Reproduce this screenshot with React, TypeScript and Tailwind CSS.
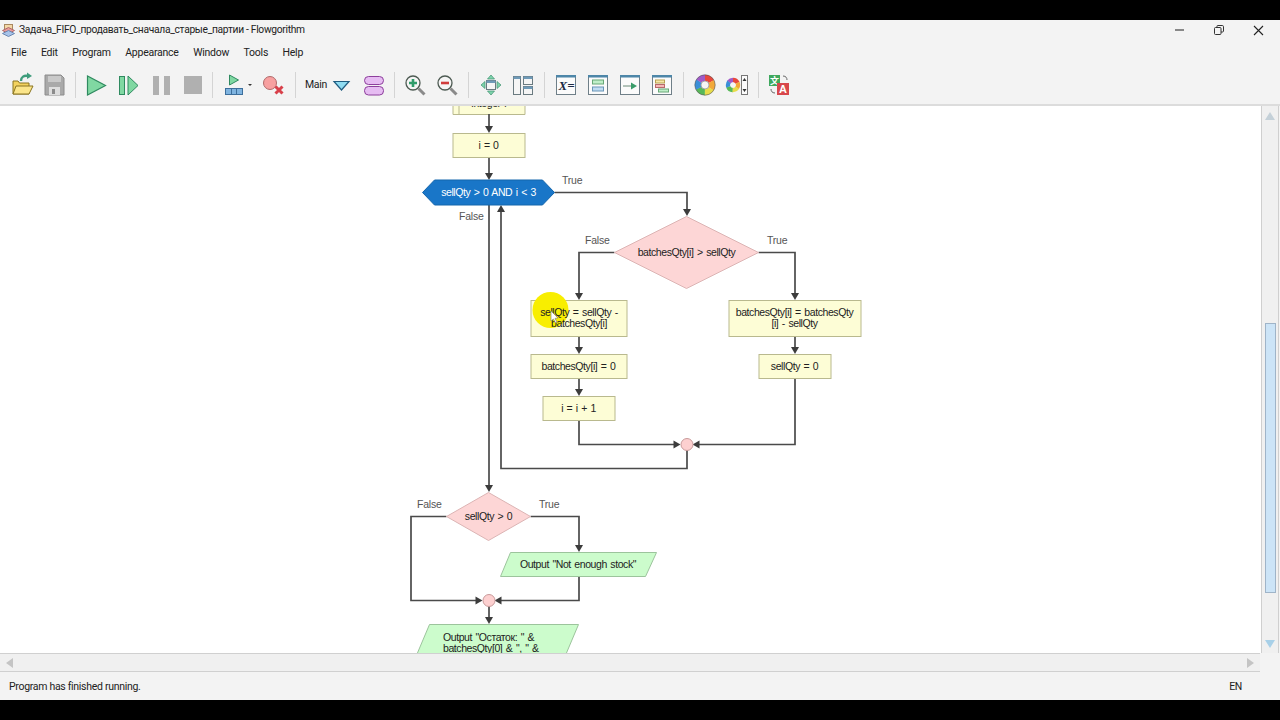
import type { ReactNode } from "react"

const menuItems = ["File", "Edit", "Program", "Appearance", "Window", "Tools", "Help"]

function Ico({ children, w = 32 }: { children: ReactNode; w?: number }) {
  return (
    <svg width={w} height={32} viewBox={`0 0 ${w} 32`} className="shrink-0">
      {children}
    </svg>
  )
}

function Sep({ className }: { className: string }) {
  return <div className={`h-[26px] w-px shrink-0 bg-[#d4d4d4] ${className}`} />
}

// little window frame used by the four "panel" buttons
function Panel({ children }: { children?: ReactNode }) {
  return (
    <>
      <rect x="6.5" y="6.5" width="19" height="19" fill="#fbfbfb" stroke="#6f7f88" />
      <rect x="6" y="6" width="20" height="2.5" fill="#4d86a8" />
      {children}
    </>
  )
}

function Wheel({ cx, cy, r, sw }: { cx: number; cy: number; r: number; sw: number }) {
  const colors = ["#e8483c", "#f2a93a", "#e8dc4a", "#58b858", "#3a8fd8", "#a05ac8"]
  const c = 2 * Math.PI * r
  return (
    <g transform={`rotate(-90 ${cx} ${cy})`}>
      {colors.map((col, i) => (
        <circle
          key={col}
          cx={cx}
          cy={cy}
          r={r}
          fill="none"
          stroke={col}
          strokeWidth={sw}
          strokeDasharray={`${c / 6 + 0.3} ${c}`}
          strokeDashoffset={(-i * c) / 6}
        />
      ))}
    </g>
  )
}

function Toolbar() {
  return (
    <div className="flex h-[36px] items-center pl-[6px]">
      <Ico>
        <path d="M7 25V12h5l1.5 2H23v11z" fill="#f3d25f" stroke="#8a7420" />
        <path d="M7 25l3-8h17l-4 8z" fill="#fbe58a" stroke="#8a7420" />
        <path d="M15 12c0-4 3-6 7-5" fill="none" stroke="#3e9c7c" strokeWidth="2.4" />
        <path d="M21 3.5l5 3.5-5 3z" fill="#3e9c7c" />
      </Ico>
      <Ico>
        <path d="M7 6h16l3 3v17H7z" fill="#a9a9a9" stroke="#8c8c8c" />
        <rect x="10" y="7" width="13" height="6" fill="#c9c9c9" />
        <rect x="11" y="18" width="11" height="8" fill="#dedede" />
        <rect x="14" y="20" width="3" height="5" fill="#8c8c8c" />
      </Ico>
      <Sep className="ml-[5px] mr-[4px]" />
      <Ico>
        <path d="M7.5 7v19l18-9.5z" fill="#80d8a2" stroke="#2f8a60" strokeWidth="1.2" />
      </Ico>
      <Ico>
        <rect x="7.5" y="7.5" width="5" height="18" fill="#80d8a2" stroke="#2f8a60" />
        <path d="M16 7v19l10-9.5z" fill="#80d8a2" stroke="#2f8a60" />
      </Ico>
      <Ico>
        <rect x="9" y="7" width="6" height="19" fill="#b0b0b0" />
        <rect x="20" y="7" width="6" height="19" fill="#b0b0b0" />
      </Ico>
      <Ico>
        <rect x="8" y="7" width="18" height="18" fill="#b0b0b0" />
      </Ico>
      <Sep className="ml-[4px] mr-[5px]" />
      <Ico w={38}>
        <path d="M11.5 6v10l9-5z" fill="#80d8a2" stroke="#2f8a60" />
        <rect x="7.5" y="19.5" width="17" height="6" fill="#7fb4e0" stroke="#3d6f9c" />
        <path d="M13.5 19.5v6M18.5 19.5v6" stroke="#3d6f9c" />
        <path d="M30 15h4l-2 2z" fill="#333" />
      </Ico>
      <Ico>
        <circle cx="14" cy="14" r="6.5" fill="#f7a0a0" stroke="#b06a6a" />
        <path d="M19.5 17.5l7 7M26.5 17.5l-7 7" stroke="#d8404a" strokeWidth="3" />
      </Ico>
      <Sep className="ml-[7px] mr-[2px]" />
      <span className="w-[28px] shrink-0 pl-[7px] font-['Roboto',sans-serif] text-[10.5px] tracking-[-0.3px] text-[#222]">
        Main
      </span>
      <Ico>
        <path d="M8 12.5h15l-7.5 8.5z" fill="#8fdcf2" stroke="#1f5c80" strokeWidth="1.2" />
      </Ico>
      <Ico>
        <rect x="6.5" y="7.5" width="19" height="8" rx="4" fill="#e6bcf2" stroke="#8d3f9c" />
        <rect x="6.5" y="17.5" width="19" height="8.5" rx="4" fill="#e6bcf2" stroke="#8d3f9c" />
      </Ico>
      <Sep className="ml-[4px] mr-[4px]" />
      <Ico>
        <circle cx="14" cy="14" r="7" fill="#f5f5f5" stroke="#4d5a52" strokeWidth="1.3" />
        <path d="M19.5 19.5l6 6" stroke="#8a8a8a" strokeWidth="3" />
        <path d="M14 10v8M10 14h8" stroke="#2f9c6a" strokeWidth="2.6" />
      </Ico>
      <Ico>
        <circle cx="14" cy="14" r="7" fill="#f5f5f5" stroke="#4d5a52" strokeWidth="1.3" />
        <path d="M19.5 19.5l6 6" stroke="#8a8a8a" strokeWidth="3" />
        <path d="M10 14h8" stroke="#d03c3c" strokeWidth="2.6" />
      </Ico>
      <Sep className="ml-[5px] mr-[6px]" />
      <Ico>
        <rect x="11.5" y="11.5" width="9" height="9" fill="#f5f5f5" stroke="#6a7a80" />
        <rect x="11.5" y="11.5" width="9" height="2.5" fill="#6f9ab8" />
        <path d="M16 6l3.5 4h-7zM16 26l-3.5-4h7zM6 16l4-3.5v7zM26 16l-4 3.5v-7z" fill="#7fd4ac" stroke="#3d8f70" strokeWidth="0.7" />
      </Ico>
      <Ico>
        <rect x="6.5" y="7.5" width="7" height="18" fill="#f5f5f5" stroke="#6a7a80" />
        <rect x="6.5" y="7.5" width="7" height="2.5" fill="#6f9ab8" />
        <rect x="16.5" y="7.5" width="9" height="8" fill="#f5f5f5" stroke="#6a7a80" />
        <rect x="16.5" y="7.5" width="9" height="2.5" fill="#6f9ab8" />
        <rect x="16.5" y="17.5" width="9" height="8" fill="#f5f5f5" stroke="#6a7a80" />
        <rect x="16.5" y="17.5" width="9" height="2.5" fill="#6f9ab8" />
      </Ico>
      <Sep className="ml-[5px] mr-[5px]" />
      <Ico>
        <Panel>
          <text x="8.5" y="21" fontFamily="'Liberation Serif', serif" fontStyle="italic" fontWeight="700" fontSize="13" fill="#1c2a44">X=</text>
        </Panel>
      </Ico>
      <Ico>
        <Panel>
          <rect x="10.5" y="11" width="11" height="4" fill="#bfeec8" stroke="#68a878" />
          <rect x="10.5" y="18" width="11" height="4" fill="#c0dcf2" stroke="#6a96b8" />
        </Panel>
      </Ico>
      <Ico>
        <Panel>
          <path d="M9 17h8" stroke="#6a8a78" />
          <path d="M17 13.5l6 3.5-6 3.5z" fill="#3a9c6a" />
        </Panel>
      </Ico>
      <Ico>
        <Panel>
          <rect x="9.5" y="11" width="9" height="3" fill="#f6e8a8" stroke="#b8a050" />
          <rect x="9.5" y="15.5" width="9" height="3" fill="#f6b8b8" stroke="#b86a6a" />
          <rect x="12.5" y="20" width="10" height="3" fill="#bfeec8" stroke="#68a878" />
        </Panel>
      </Ico>
      <Sep className="ml-[5px] mr-[5px]" />
      <Ico>
        <Wheel cx={16} cy={16} r={7.2} sw={6} />
        <circle cx="16" cy="16" r="10.2" fill="none" stroke="#555" strokeWidth="0.6" />
        <circle cx="16" cy="16" r="4" fill="#f5f5f5" stroke="#777" strokeWidth="0.6" />
      </Ico>
      <Ico>
        <Wheel cx={12} cy={16} r={5} sw={4.4} />
        <circle cx="12" cy="16" r="2.6" fill="#f5f5f5" />
        <rect x="20.5" y="6.5" width="6" height="19" fill="#fbfbfb" stroke="#777" />
        <path d="M23.5 9l2 3h-4zM23.5 23l-2-3h4z" fill="#333" />
      </Ico>
      <Sep className="ml-[5px] mr-[5px]" />
      <Ico>
        <rect x="5" y="6" width="11" height="11" fill="#3fa85c" />
        <text x="10.5" y="15" textAnchor="middle" fontFamily="'Noto Sans CJK SC', sans-serif" fontSize="9" fontWeight="700" fill="#fff">文</text>
        <rect x="13" y="14" width="12" height="12" fill="#d8474c" />
        <text x="19" y="24" textAnchor="middle" fontFamily="'Liberation Sans', sans-serif" fontSize="11" fontWeight="700" fill="#fff">A</text>
        <path d="M19 7c3 0 4 2 4 4M7 20c0 2 1 4 4 4" fill="none" stroke="#666" />
      </Ico>
    </div>
  )
}

function Arrow({ x, y, dir }: { x: number; y: number; dir: "d" | "u" | "l" | "r" }) {
  const p = {
    d: `${x - 4},${y - 7} ${x + 4},${y - 7} ${x},${y}`,
    u: `${x - 4},${y + 7} ${x + 4},${y + 7} ${x},${y}`,
    r: `${x - 7},${y - 4} ${x - 7},${y + 4} ${x},${y}`,
    l: `${x + 7},${y - 4} ${x + 7},${y + 4} ${x},${y}`,
  }[dir]
  return <polygon points={p} fill="#3c3c3c" />
}

function Box({ x, y, w, h, lines }: { x: number; y: number; w: number; h: number; lines: string[] }) {
  const cx = x + w / 2
  const cy = y + h / 2
  return (
    <>
      <rect x={x + 0.5} y={y + 0.5} width={w} height={h} fill="#fdfdd6" stroke="#b9b98e" />
      {lines.map((l, i) => (
        <text key={l} x={cx} y={cy + 3.5 + (i - (lines.length - 1) / 2) * 11} textAnchor="middle">
          {l}
        </text>
      ))}
    </>
  )
}

function Flowchart() {
  const wires = [
    "M489.5 114V128",
    "M489.5 157V175",
    "M555 192.5H687.5V211",
    "M615 252.5H579.5V295",
    "M579.5 336V349",
    "M579.5 378V391",
    "M579.5 420V444.5H675",
    "M759 252.5H795.5V295",
    "M795.5 336V349",
    "M795.5 378V444.5H699",
    "M687.5 450V468.5H501.5V212",
    "M489.5 205V487",
    "M447 516.5H411.5V600.5H477",
    "M531 516.5H579.5V547",
    "M579.5 576V600.5H501",
    "M489.5 606V619",
  ]
  return (
    <svg
      width={1261}
      height={547}
      viewBox="0 106 1261 547"
      fontFamily="'Liberation Sans', Arial, sans-serif"
      fontSize="10.5"
      letterSpacing="-0.42"
      wordSpacing="1"
      fill="#222"
      className="block"
    >
      <g transform="translate(-0.5 0)">
        <path d="M453.5 90V114.5H525.5V90" fill="#fdfdd6" stroke="#b9b98e" />
        <path d="M459.5 90V114.5" stroke="#b9b98e" />
        <text x="489" y="107" textAnchor="middle">Integer i</text>

        {wires.map((d) => (
          <path key={d} d={d} fill="none" stroke="#4a4a4a" strokeWidth="1.7" />
        ))}
        <Arrow x={489.5} y={133} dir="d" />
        <Arrow x={489.5} y={180} dir="d" />
        <Arrow x={687.5} y={216} dir="d" />
        <Arrow x={579.5} y={300} dir="d" />
        <Arrow x={579.5} y={354} dir="d" />
        <Arrow x={579.5} y={396} dir="d" />
        <Arrow x={681} y={444.5} dir="r" />
        <Arrow x={795.5} y={300} dir="d" />
        <Arrow x={795.5} y={354} dir="d" />
        <Arrow x={693} y={444.5} dir="l" />
        <Arrow x={501.5} y={205} dir="u" />
        <Arrow x={489.5} y={492} dir="d" />
        <Arrow x={483} y={600.5} dir="r" />
        <Arrow x={579.5} y={552} dir="d" />
        <Arrow x={495} y={600.5} dir="l" />
        <Arrow x={489.5} y={624} dir="d" />

        <Box x={453} y={133} w={72} h={24} lines={["i = 0"]} />

        <polygon points="423,192.5 435,180 543,180 555,192.5 543,205 435,205" fill="#1976c8" stroke="#1566ac" />
        <text x="489" y="195.5" textAnchor="middle" fill="#fff">sellQty &gt; 0 AND i &lt; 3</text>

        <polygon points="615,252.5 687,216.5 759,252.5 687,288.5" fill="#fdd6d6" stroke="#dcb4b4" />
        <text x="687" y="255.5" textAnchor="middle">batchesQty[i] &gt; sellQty</text>

        <rect x="531.5" y="300.5" width="96" height="36" fill="#fdfdd6" stroke="#b9b98e" />
        <circle cx="551" cy="310" r="18" fill="#f8ee00" />
        <text x="579.5" y="316" textAnchor="middle">sellQty = sellQty -</text>
        <text x="579.5" y="327" textAnchor="middle">batchesQty[i]</text>
        <path d="M551.5 311v10l2.5-2 2 4 1.5-.8-2-3.8 3-.4z" fill="#fff" stroke="#8a8a6a" strokeWidth="0.7" />

        <Box x={531} y={354} w={96} h={24} lines={["batchesQty[i] = 0"]} />
        <Box x={543} y={396} w={72} h={24} lines={["i = i + 1"]} />
        <Box x={729} y={300} w={132} h={36} lines={["batchesQty[i] = batchesQty", "[i] - sellQty"]} />
        <Box x={759} y={354} w={72} h={24} lines={["sellQty = 0"]} />

        <circle cx="687.5" cy="444.5" r="6" fill="#fdd0d0" stroke="#c89a9a" />
        <circle cx="489.5" cy="600.5" r="6" fill="#fdd0d0" stroke="#c89a9a" />

        <polygon points="447,516.5 489,492.5 531,516.5 489,540.5" fill="#fdd6d6" stroke="#dcb4b4" />
        <text x="489" y="519.5" textAnchor="middle">sellQty &gt; 0</text>

        <polygon points="511,552.5 657,552.5 646,576.5 501,576.5" fill="#ccfccc" stroke="#9cc49c" />
        <text x="578.5" y="567.5" textAnchor="middle">Output "Not enough stock"</text>

        <polygon points="430,624.5 579,624.5 564,660 415,660" fill="#ccfccc" stroke="#9cc49c" />
        <text x="443.5" y="640.5">Output "Остаток: " &amp;</text>
        <text x="443.5" y="651.5">batchesQty[0] &amp; ", " &amp;</text>

        <g fill="#555" fontSize="10.5" letterSpacing="-0.2">
          <text x="562.5" y="184">True</text>
          <text x="459.5" y="220">False</text>
          <text x="585.5" y="244">False</text>
          <text x="767.5" y="244">True</text>
          <text x="417.5" y="508">False</text>
          <text x="539.5" y="508">True</text>
        </g>
      </g>
    </svg>
  )
}

export default function App() {
  return (
    <div className="flex h-[720px] w-[1280px] flex-col overflow-hidden bg-black font-['Roboto',sans-serif] text-[#222]">
      <div className="h-[20px] shrink-0" />
      <div className="flex min-h-0 flex-1 flex-col bg-[#f3f3f3]">
        {/* title bar */}
        <div className="flex h-[20px] shrink-0 items-center pl-[2px]">
          <svg width="13" height="13" viewBox="0 0 13 13" className="mr-[4px] shrink-0">
            <rect x="2.5" y="0.5" width="8" height="5" fill="#f4d8a8" stroke="#a88860" />
            <path d="M0.5 6.5L6.5 3.5l6 3-6 3z" fill="#e89a9a" stroke="#b06a6a" />
            <path d="M0.5 9.5L6.5 6.5l6 3-6 3z" fill="#a8c4ea" stroke="#6a86b0" />
          </svg>
          <span className="text-[10.25px] leading-none tracking-[-0.3px]">Задача_FIFO_продавать_сначала_старые_партии - Flowgorithm</span>
          <div className="ml-auto flex items-center">
            <div className="h-[1.5px] w-[9px] bg-[#888]" />
            <svg width="10" height="10" viewBox="0 0 10 10" className="ml-[30px]" fill="none" stroke="#333" strokeWidth="1">
              <rect x="0.5" y="2.5" width="6.5" height="7" rx="1" />
              <path d="M3 2.5V1.2q0-.7.7-.7h4.6q1.2 0 1.2 1.2V6q0 .9-1 1H7" />
            </svg>
            <svg width="11" height="11" viewBox="0 0 11 11" className="ml-[29px] mr-[16px]" stroke="#222" strokeWidth="1.1">
              <path d="M1 1l9 9M10 1l-9 9" />
            </svg>
          </div>
        </div>
        {/* menu */}
        <div className="mt-[2px] flex h-[20px] shrink-0 items-center gap-[14.5px] pl-[11px] pt-[1px] text-[10.5px] tracking-[-0.25px]">
          {menuItems.map((m) => (
            <span key={m}>{m}</span>
          ))}
        </div>
        <div className="mt-[5px]">
          <Toolbar />
        </div>
        {/* canvas + vertical scrollbar */}
        <div className="mt-[1px] flex h-[549px] shrink-0 border-t-2 border-[#dcdcdc]">
          <div className="h-[547px] w-[1261px] overflow-hidden bg-white">
            <Flowchart />
          </div>
          <div className="flex w-[18px] flex-col items-center border-x border-[#cfcfcf] bg-[#f0f0f0] pt-[6px]">
            <div className="h-0 w-0 border-x-[5px] border-b-[8px] border-x-transparent border-b-[#c4d0d8]" />
            <div className="mt-[203px] h-[270px] w-[11px] shrink-0 border border-[#9fb4c8] bg-[#cce4f7]" />
            <div className="mt-[47px] h-0 w-0 border-x-[5px] border-t-[8px] border-x-transparent border-t-[#a8d0e8]" />
          </div>
        </div>
        {/* horizontal scrollbar */}
        <div className="flex h-[19px] w-[1260px] shrink-0 items-center justify-between border-y border-[#d0d0d0] bg-[#f0f0f0] px-[6px]">
          <div className="h-0 w-0 border-y-[5px] border-r-[7px] border-y-transparent border-r-[#c4c4c4]" />
          <div className="h-0 w-0 border-y-[5px] border-l-[7px] border-y-transparent border-l-[#c4c4c4]" />
        </div>
        {/* status bar */}
        <div className="flex flex-1 items-center justify-between pl-[9px] pr-[38px] pt-[2px] text-[10.5px] tracking-[-0.3px]">
          <span>Program has finished running.</span>
          <span>EN</span>
        </div>
      </div>
      <div className="h-[20px] shrink-0" />
    </div>
  )
}
